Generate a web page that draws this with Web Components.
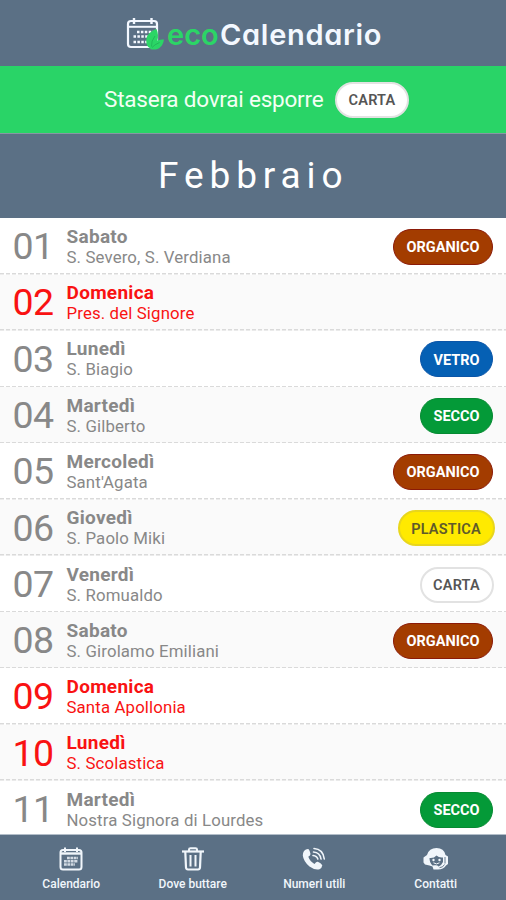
<!DOCTYPE html>
<html lang="it">
<head>
<meta charset="utf-8">
<title>ecoCalendario</title>
<style>
html,body{margin:0;height:100%}
body{font-family:Roboto,"Liberation Sans",sans-serif;background:#fff;overflow:hidden}
</style>
</head>
<body>
<eco-app></eco-app>
<script>
const define = (name, html) => customElements.define(name, class extends HTMLElement {
  connectedCallback() {
    if (this.shadowRoot) return;
    const root = this.attachShadow({ mode: 'open' });
    root.innerHTML = typeof html === 'function' ? html(this) : html;
  }
});

define('eco-badge', `
<style>
:host{display:inline-flex;align-items:center;justify-content:center;box-sizing:border-box;height:36px;padding-top:3px;border-radius:18px;
font-size:14.5px;line-height:1;font-weight:700;color:#fff;border:1px solid transparent;white-space:nowrap}
:host([kind=organico]){background:#a33c00;border-color:#8b1a08;width:100px}
:host([kind=vetro]){background:#0560b4;border-color:#0a55a8;width:73px}
:host([kind=secco]){background:#049a38;border-color:#068a32;width:73px}
:host([kind=plastica]){background:#ffea00;border:2px solid #e8d61c;color:#5e5a2a;width:97px;margin-right:-1.5px;font-weight:600;letter-spacing:.2px}
:host([kind=carta]){background:#fff;border:2px solid #e2e2e2;color:#555;width:74px;margin-right:-.5px;font-weight:600;letter-spacing:.2px}
</style><slot></slot>`);

define('eco-logo', `
<style>
:host{display:flex;box-sizing:border-box;height:66px;padding:1px 0 0 126px;align-items:center;background:#5b7085;color:#f3f8ff}
svg{display:block;width:38px;height:34px;flex:none}
.n{font:600 29px/1 Inter,Lato,sans-serif;font-feature-settings:"cv11" 1;margin-left:3px;padding-top:2px;display:flex;white-space:pre}
.e{color:#2bd566;letter-spacing:0;width:53px}
.c{letter-spacing:.7px}
</style>
<svg viewBox="0 0 38 34" fill="none">
<rect x="2" y="4" width="29" height="26" rx="3" stroke="#f3f8ff" stroke-width="2.2"/>
<path d="M2 9.8H31" stroke="#f3f8ff" stroke-width="2"/>
<path d="M8 1v6M25.5 1v6" stroke="#f3f8ff" stroke-width="2.4"/>
<path d="M11 15H27M7.5 19.5H27M7.5 25H22" stroke="#f3f8ff" stroke-width="2.3" stroke-dasharray="2.5 1.4"/>
<path d="M30.500 12C25 14 20.500 17.500 20.300 23C20 28 22 31 26 31.500C31 28 34 20 30.500 12Z" fill="#2bd566"/>
<path d="M38 22.500C33 22.500 29.500 23.500 27 27L24 32C31 34 36.500 31 38 22.500Z" fill="#2bd566"/>
<path d="M29 19Q25 24 25.500 29.500M33.500 25.500Q28.500 27.500 26 30.500" stroke="#1fae56" stroke-width=".8"/>
</svg>
<div class="n"><span class="e">eco</span><span class="c">Calendario</span></div>`);

define('eco-notice', `
<style>
:host{display:flex;box-sizing:border-box;height:67px;align-items:center;justify-content:flex-start;padding-left:104px;background:#29d467;color:#f3fff4;font-size:22.5px;white-space:nowrap}
span{width:231px;flex:none;letter-spacing:-.22px;padding-bottom:2px}
</style>
<span>Stasera dovrai esporre</span><slot></slot>`);

define('eco-month', `
<style>
:host{display:block;box-sizing:border-box;height:85px;border-top:1px solid #8796a3;background:#5b7085;color:#fff;padding-left:158px;font-size:37px;line-height:84px;letter-spacing:5.9px}
</style><slot></slot>`);

define('eco-day', el => `
<style>
:host{display:flex;box-sizing:border-box;height:56.27px;flex:none;align-items:center;padding:1px 13px 0 12.500px;color:#888;
background:repeating-linear-gradient(90deg,#dadada 0 4px,transparent 4px 6px) 0 100%/100% 1.5px no-repeat}
:host(:nth-of-type(even)){background-color:#fafafa}
:host([festivo]){color:#f91212}
.d{font-size:37.500px;line-height:1;width:54px;flex:none;letter-spacing:-.6px}
.t{flex:1;white-space:nowrap}
.w{font-size:19px;line-height:20px;font-weight:700;letter-spacing:.28px}
.s{font-size:16.8px;line-height:20px;letter-spacing:.14px}
</style>
<div class="d">${el.getAttribute('num')}</div>
<div class="t"><div class="w">${el.getAttribute('giorno')}</div><div class="s">${el.getAttribute('santo')}</div></div>
<slot></slot>`);

define('eco-tab', `
<style>
:host{display:flex;flex-direction:column;align-items:center;width:121.5px;flex:none;box-sizing:border-box;padding-top:12px;color:#f1f6fb;font-size:12px;font-weight:500;line-height:14px;white-space:nowrap}
::slotted(svg){display:block;width:26px;height:24px;margin-bottom:6px}
</style><slot name="icon"></slot><slot></slot>`);

define('eco-tabs', `
<style>
:host{display:flex;box-sizing:border-box;height:66px;padding-left:10.500px;background:#5b7085;border-top:1px solid #b3bec9;position:absolute;left:0;right:0;bottom:0}
</style><slot></slot>`);

const days = [
 ['01','Sabato','S. Severo, S. Verdiana','organico'],
 ['02','Domenica','Pres. del Signore','',1],
 ['03','Lunedì','S. Biagio','vetro'],
 ['04','Martedì','S. Gilberto','secco'],
 ['05','Mercoledì',"Sant'Agata",'organico'],
 ['06','Giovedì','S. Paolo Miki','plastica'],
 ['07','Venerdì','S. Romualdo','carta'],
 ['08','Sabato','S. Girolamo Emiliani','organico'],
 ['09','Domenica','Santa Apollonia','',1],
 ['10','Lunedì','S. Scolastica','',1],
 ['11','Martedì','Nostra Signora di Lourdes','secco']
];

define('eco-app', () => `
<style>
:host{display:flex;flex-direction:column;position:relative;width:506px;height:900px;overflow:hidden}
section{display:flex;flex-direction:column;padding-top:.3px}
</style>
<eco-logo></eco-logo>
<eco-notice><eco-badge kind="carta">CARTA</eco-badge></eco-notice>
<eco-month>Febbraio</eco-month>
<section>${days.map(([n,g,s,k,f]) => `<eco-day num="${n}" giorno="${g}" santo="${s}"${f ? ' festivo' : ''}>${k ? `<eco-badge kind="${k}">${k.toUpperCase()}</eco-badge>` : ''}</eco-day>`).join('')}</section>
<eco-tabs>
<eco-tab><svg slot="icon" viewBox="0 0 26 24" fill="none" stroke="#f1f6fb">
<rect x="2.500" y="3" width="21" height="19.500" rx="2.500" stroke-width="2"/><path d="M2.500 6.500H23.500" stroke-width="2.400"/><path d="M7 .5V5M19 .5V5" stroke-width="2"/><path d="M9 11H20M6 14.300H20M6 17.600H17" stroke-width="2.500" stroke-dasharray="2.800 .6" opacity=".8"/></svg>Calendario</eco-tab>
<eco-tab><svg slot="icon" viewBox="0 0 26 24" fill="none" stroke="#f1f6fb">
<path d="M2 4.500H24" stroke-width="2.200"/><path d="M9 4V2.500Q9 1.200 10.500 1.200H15.500Q17 1.200 17 2.500V4" stroke-width="2"/><path d="M5.300 5L6 20.500Q6.200 22.500 8 22.500H18Q19.800 22.500 20 20.500L20.700 5" stroke-width="2.200"/><path d="M10.500 8V19.500M15.500 8V19.500" stroke-width="2"/></svg>Dove buttare</eco-tab>
<eco-tab><svg slot="icon" viewBox="0 0 26 24">
<path fill="#f1f6fb" d="M3 4Q5 1.800 7.200 2Q8.500 2.500 9.500 7Q9.500 8.500 7.300 9.800Q9 14.500 13.500 17Q15.300 14.500 16.800 14.800Q20 16 21.300 18.300Q21 21 18.500 22.300Q14 23.500 8.500 19.500Q2.500 14.500 1.800 8.500Q1.800 5.500 3 4Z"/>
<g fill="none" stroke="#f1f6fb" stroke-width="1.600" stroke-linecap="round"><path d="M13 1.500Q22 2 23.300 12"/><path d="M12.500 5Q19 5.500 20 12"/><path d="M12 8.500Q16 9 16.800 12"/></g></svg>Numeri utili</eco-tab>
<eco-tab><svg slot="icon" viewBox="0 0 26 24">
<path fill="#f1f6fb" d="M4 8Q6 1 13.500 1T22.500 8L25 9.500V17L23 18.500Q20.500 22.500 15 22.500H10.500L9.500 19.500L6.500 18.500L2 17.500L.5 15.500V10.500Z"/>
<path fill="#5b7085" d="M6.500 11Q11 11.500 13.500 8.500Q16 11 20 10.500V15Q18.500 18.500 15.500 19.500Q14.500 18 12 18.300L9.500 18.500Q6.500 16 6.500 11Z"/>
<circle cx="10.500" cy="13" r="1.200" fill="#f1f6fb"/><circle cx="16.500" cy="13" r="1.200" fill="#f1f6fb"/><path d="M10.500 15.800Q13.500 18 16.500 15.800" fill="none" stroke="#f1f6fb"/><path d="M21.500 17.500Q20 20.500 16.500 20.700M22 10V16.500" fill="none" stroke="#5b7085" stroke-width=".9"/></svg>Contatti</eco-tab>
</eco-tabs>`);
</script>
</body>
</html>
